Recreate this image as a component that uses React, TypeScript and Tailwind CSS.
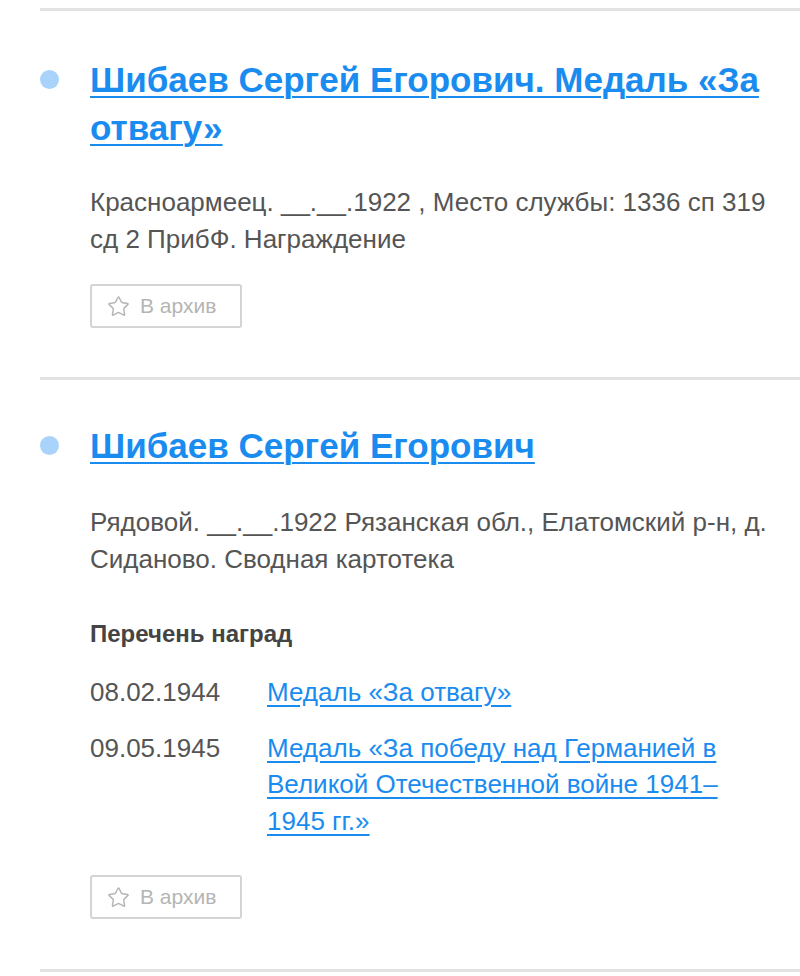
import { Star } from "lucide-react";

const font = { fontFamily: '"Liberation Sans", Arial, sans-serif' };

const ArchiveButton = () => (
  <button className="flex items-center gap-[10px] h-[44px] w-[152px] px-[15px] border-2 border-[#d4d4d4] rounded-[3px] text-[#b5b5b5] text-[21px]">
    <Star size={23} strokeWidth={1.5} />
    <span>В архив</span>
  </button>
);

const Title = ({ children }: { children: React.ReactNode }) => (
  <div className="flex items-start">
    <span className="mt-[14px] ml-[40px] mr-[31px] h-[19px] w-[19px] shrink-0 rounded-full bg-[#a9d3fa]" />
    <a href="#" className="text-[35px] leading-[48px] font-bold text-[#1a8cf0] underline underline-offset-4 decoration-2">
      {children}
    </a>
  </div>
);

export default function App() {
  return (
    <div className="bg-white min-h-[976px] text-[#555]" style={font}>
      <div className="pt-[8px]">
        <div className="ml-[40px] h-[3px] bg-[#e2e2e2]" />
      </div>

      <section className="pt-[45px] pb-[49px] pr-[20px]">
        <Title>Шибаев Сергей Егорович. Медаль «За отвагу»</Title>
        <p className="ml-[90px] mt-[32px] text-[26px] leading-[37px]">
          Красноармеец. __.__.1922 , Место службы: 1336 сп 319 сд 2 ПрибФ. Награждение
        </p>
        <div className="ml-[90px] mt-[26px]">
          <ArchiveButton />
        </div>
      </section>

      <div className="ml-[40px] h-[3px] bg-[#e2e2e2]" />

      <section className="pt-[42px] pb-[50px] pr-[20px]">
        <Title>Шибаев Сергей Егорович</Title>
        <div className="ml-[90px]">
          <p className="mt-[34px] text-[26px] leading-[37px]">
            Рядовой. __.__.1922 Рязанская обл., Елатомский р-н, д. Сиданово. Сводная картотека
          </p>
          <h4 className="mt-[40px] text-[24px] leading-[32px] font-bold text-[#444]">Перечень наград</h4>
          <div className="mt-[24px] flex flex-col gap-[19px] text-[26px] leading-[36.5px]">
            <div className="flex">
              <span className="w-[177px] shrink-0">08.02.1944</span>
              <a href="#" className="text-[#1a8cf0] underline underline-offset-4">
                Медаль «За отвагу»
              </a>
            </div>
            <div className="flex">
              <span className="w-[177px] shrink-0">09.05.1945</span>
              <a href="#" className="text-[#1a8cf0] underline underline-offset-4">
                Медаль «За победу над Германией в Великой Отечественной войне 1941–<br />1945 гг.»
              </a>
            </div>
          </div>
          <div className="mt-[36px]">
            <ArchiveButton />
          </div>
        </div>
      </section>

      <div className="ml-[40px] h-[3px] bg-[#e2e2e2]" />
    </div>
  );
}
